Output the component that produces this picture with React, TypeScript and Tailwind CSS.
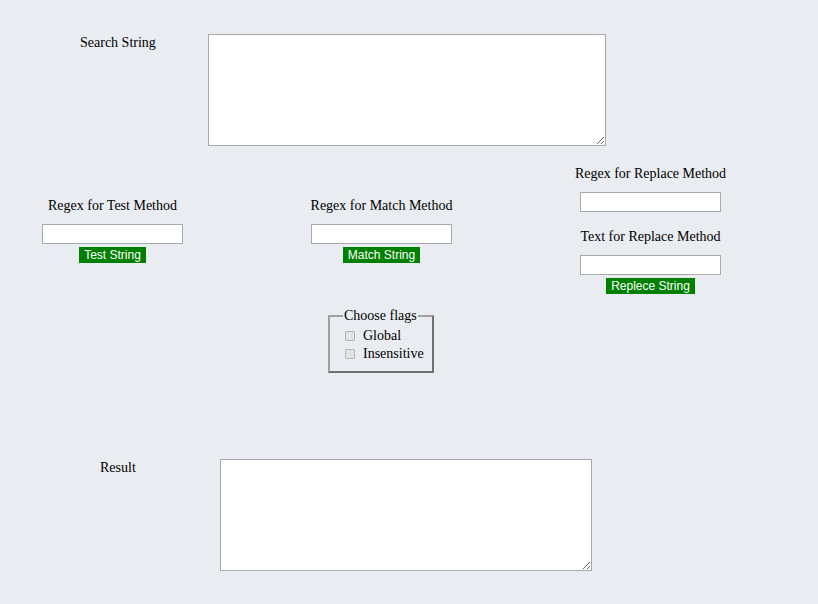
const serif = "font-['Liberation_Serif',serif] text-[14px] leading-[16px] text-black";

function Field({ label }: { label: string }) {
  return (
    <>
      <label className={`${serif} whitespace-nowrap`}>{label}</label>
      <input
        type="text"
        className="mt-[10px] h-[20px] w-[141px] border border-[#a9a9a9] bg-white outline-none"
      />
    </>
  );
}

function Btn({ text }: { text: string }) {
  return (
    <button className="mt-[3px] h-[16px] bg-[#008000] px-[5px] font-['Liberation_Sans',sans-serif] text-[12px] leading-[16px] text-white">
      {text}
    </button>
  );
}

export default function App() {
  return (
    <main className="min-h-screen w-full bg-[#e9ecf0] pt-[34px]">
      {/* search */}
      <div className="flex">
        <label className={`${serif} w-[208px] shrink-0 pl-[80px] pt-[1px] whitespace-nowrap`}>
          Search String
        </label>
        <textarea className="h-[112px] w-[398px] resize-y border border-[#a9a9a9] bg-white outline-none" />
      </div>

      {/* methods */}
      <div className="mt-[20px] flex items-center gap-[128px] pl-[42px]">
        <div className="flex w-[141px] flex-col items-center">
          <Field label="Regex for Test Method" />
          <Btn text="Test String" />
        </div>
        <div className="flex w-[141px] flex-col items-center">
          <Field label="Regex for Match Method" />
          <Btn text="Match String" />
        </div>
        <div className="flex w-[141px] flex-col items-center">
          <Field label="Regex for Replace Method" />
          <div className="h-[17px]" />
          <Field label="Text for Replace Method" />
          <Btn text="Replece String" />
        </div>
      </div>

      {/* flags */}
      <div className="mt-[14px] flex justify-center pr-[56px]">
        <fieldset className="w-[106px] border-2 border-[#a0a0a0] border-b-[#707070] border-r-[#707070] pb-[8px] pl-[15px] pr-[6px] pt-[3px]">
          <legend className={`${serif} ml-[-2px] px-[1px]`}>Choose flags</legend>
          {["Global", "Insensitive"].map((f) => (
            <label key={f} className={`${serif} flex items-center gap-[8px] leading-[18px]`}>
              <span className="h-[10px] w-[10px] rounded-[1px] border border-[#b5b5b5] bg-[#e2e2e2]" />
              {f}
            </label>
          ))}
        </fieldset>
      </div>

      {/* result */}
      <div className="mt-[86px] flex pb-[32px]">
        <label className={`${serif} w-[220px] shrink-0 pl-[100px] pt-[1px]`}>Result</label>
        <textarea className="h-[112px] w-[372px] resize-y border border-[#a9a9a9] bg-white outline-none" />
      </div>
    </main>
  );
}
